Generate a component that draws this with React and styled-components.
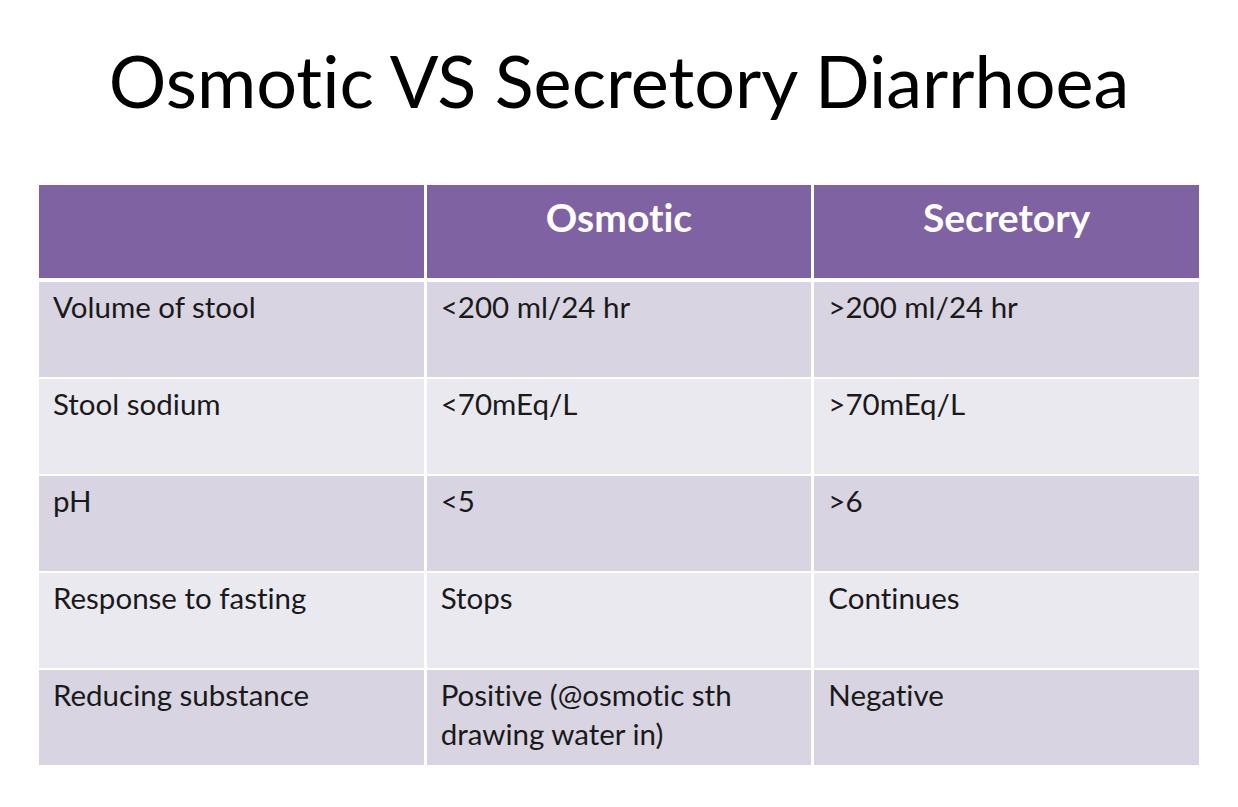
import React from "react";
import styled, { createGlobalStyle } from "styled-components";

const Global = createGlobalStyle`
  html, body { margin: 0; padding: 0; background: #ffffff; }
  body {
    font-family: Lato, "Open Sans", sans-serif;
    color: #1a1a1a;
    font-variant-ligatures: none;
    font-feature-settings: "liga" 0, "clig" 0;
  }
`;

const Slide = styled.div`
  width: 1238px;
  height: 807px;
  background: #ffffff;
  display: flex;
  flex-direction: column;
  align-items: center;
  overflow: hidden;
`;

const Title = styled.h1`
  margin: 38px 0 0 0;
  font-family: Lato, "Open Sans", sans-serif;
  font-weight: 400;
  font-size: 72px;
  line-height: 84px;
  color: #000000;
  text-align: center;
`;

const Table = styled.div`
  margin-top: 63px;
  width: 1160px;
  display: grid;
  grid-template-columns: repeat(3, 1fr);
  column-gap: 3px;
`;

const HeadCell = styled.div`
  background: #7f62a1;
  height: 93px;
  margin-bottom: 4px;
  box-sizing: border-box;
  padding-top: 10px;
  text-align: center;
  color: #ffffff;
  font-weight: 700;
  font-size: 39px;
  line-height: 44px;
`;

const Cell = styled.div`
  background: ${(p) => (p.$odd ? "#d8d4e1" : "#ebe9f0")};
  height: 95px;
  margin-bottom: 2px;
  box-sizing: border-box;
  padding: 5px 10px 0 14px;
  font-size: 29.5px;
  line-height: 39px;
  color: #1a1a1a;
`;

const head = ["", "Osmotic", "Secretory"];
const rows = [
  ["Volume of stool", "<200 ml/24 hr", ">200 ml/24 hr"],
  ["Stool sodium", "<70mEq/L", ">70mEq/L"],
  ["pH", "<5", ">6"],
  ["Response to fasting", "Stops", "Continues"],
  ["Reducing substance", "Positive (@osmotic sth drawing water in)", "Negative"],
];

export default function App() {
  return (
    <>
      <Global />
      <Slide>
        <Title>Osmotic VS Secretory Diarrhoea</Title>
        <Table>
          {head.map((h, i) => (
            <HeadCell key={"h" + i}>{h}</HeadCell>
          ))}
          {rows.map((r, ri) =>
            r.map((c, ci) => (
              <Cell key={ri + "-" + ci} $odd={ri % 2 === 0}>
                {c}
              </Cell>
            ))
          )}
        </Table>
      </Slide>
    </>
  );
}
